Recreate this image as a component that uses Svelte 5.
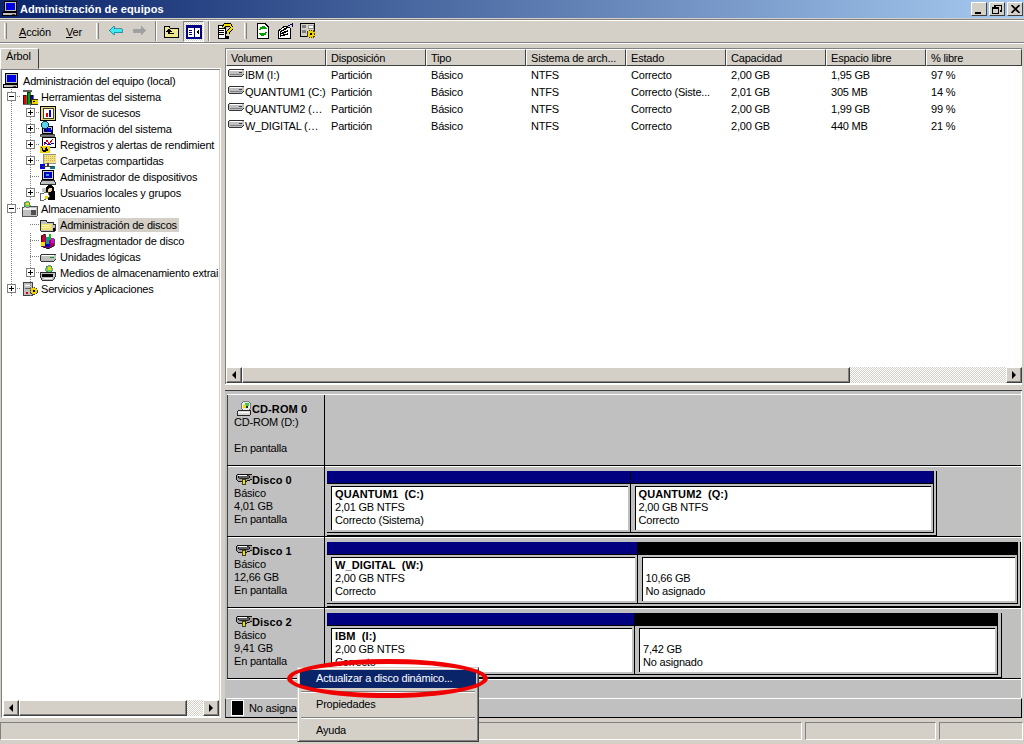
<script>
  const columns = [
    { label: 'Volumen', w: 100 },
    { label: 'Disposición', w: 100 },
    { label: 'Tipo', w: 100 },
    { label: 'Sistema de arch...', w: 100 },
    { label: 'Estado', w: 100 },
    { label: 'Capacidad', w: 100 },
    { label: 'Espacio libre', w: 100 },
    { label: '% libre', w: 96 }
  ];

  const volumes = [
    ['IBM (I:)', 'Partición', 'Básico', 'NTFS', 'Correcto', '2,00 GB', '1,95 GB', '97 %'],
    ['QUANTUM1 (C:)', 'Partición', 'Básico', 'NTFS', 'Correcto (Siste...', '2,01 GB', '305 MB', '14 %'],
    ['QUANTUM2 (…', 'Partición', 'Básico', 'NTFS', 'Correcto', '2,00 GB', '1,99 GB', '99 %'],
    ['W_DIGITAL (…', 'Partición', 'Básico', 'NTFS', 'Correcto', '2,00 GB', '440 MB', '21 %']
  ];

  const tree = [
    { level: 0, label: 'Administración del equipo (local)', icon: 'computer' },
    { level: 1, label: 'Herramientas del sistema', icon: 'tools', box: 'minus' },
    { level: 2, label: 'Visor de sucesos', icon: 'events', box: 'plus' },
    { level: 2, label: 'Información del sistema', icon: 'info', box: 'plus' },
    { level: 2, label: 'Registros y alertas de rendimient', icon: 'perf', box: 'plus' },
    { level: 2, label: 'Carpetas compartidas', icon: 'shared', box: 'plus' },
    { level: 2, label: 'Administrador de dispositivos', icon: 'device' },
    { level: 2, label: 'Usuarios locales y grupos', icon: 'users', box: 'plus' },
    { level: 1, label: 'Almacenamiento', icon: 'storage', box: 'minus' },
    { level: 2, label: 'Administración de discos', icon: 'folder', selected: true },
    { level: 2, label: 'Desfragmentador de disco', icon: 'defrag' },
    { level: 2, label: 'Unidades lógicas', icon: 'drive' },
    { level: 2, label: 'Medios de almacenamiento extrai', icon: 'removable', box: 'plus' },
    { level: 1, label: 'Servicios y Aplicaciones', icon: 'services', box: 'plus' }
  ];

  const disks = [
    {
      name: 'Disco 0',
      lines: ['Básico', '4,01 GB', 'En pantalla'],
      width: 610,
      parts: [
        { w: 304, name: 'QUANTUM1  (C:)', lines: ['2,01 GB NTFS', 'Correcto (Sistema)'] },
        { w: 304, name: 'QUANTUM2  (Q:)', lines: ['2,00 GB NTFS', 'Correcto'] }
      ]
    },
    {
      name: 'Disco 1',
      lines: ['Básico', '12,66 GB', 'En pantalla'],
      width: 694,
      parts: [
        { w: 311, name: 'W_DIGITAL  (W:)', lines: ['2,00 GB NTFS', 'Correcto'] },
        { w: 381, lines: ['10,66 GB', 'No asignado'], free: true }
      ]
    },
    {
      name: 'Disco 2',
      lines: ['Básico', '9,41 GB', 'En pantalla'],
      width: 675,
      parts: [
        { w: 308, name: 'IBM  (I:)', lines: ['2,00 GB NTFS', 'Correcto'] },
        { w: 363, lines: ['7,42 GB', 'No asignado'], free: true }
      ]
    }
  ];
</script>

{#snippet icon(name)}
  <svg class="ico" viewBox="0 0 16 16" width="16" height="16" shape-rendering="crispEdges">
    {#if name === 'computer'}
      <rect x="2.5" y="0.5" width="12" height="10" fill="#c0c0c0" stroke="#000" />
      <rect x="4" y="2" width="9" height="7" fill="#0000e0" />
      <rect x="0.5" y="11.5" width="14" height="3" fill="#c0c0c0" stroke="#000" />
      <rect x="10" y="13" width="3" height="1" fill="#404040" />
    {:else if name === 'device'}
      <rect x="2.5" y="1.5" width="11" height="9" fill="#d4d0c8" stroke="#000" />
      <rect x="4" y="3" width="8" height="6" fill="#0000c0" />
      <rect x="6" y="5" width="3" height="2" fill="#40a0ff" />
      <path d="M2 11 L14 11 L16 15 L0 15 Z" fill="#c0c0c0" stroke="#000" stroke-width="0.8" />
    {:else if name === 'tools'}
      <rect x="1" y="6" width="3" height="9" fill="#e00000" stroke="#000" stroke-width="0.6" />
      <rect x="5" y="3" width="3" height="12" fill="#00a000" stroke="#000" stroke-width="0.6" />
      <rect x="8" y="6" width="3" height="7" fill="#0000c0" stroke="#000" stroke-width="0.6" />
      <path d="M1 1 L10 1 L10 3 L1 3 Z" fill="#606060" />
      <rect x="9" y="10" width="7" height="5" fill="#f0d000" stroke="#000" stroke-width="0.8" />
      <rect x="11" y="12" width="2" height="1" fill="#000" />
    {:else if name === 'events'}
      <rect x="0.5" y="1.5" width="15" height="14" fill="#f0d870" stroke="#000" />
      <rect x="3.5" y="3.5" width="10" height="10" fill="#fff" stroke="#404040" />
      <rect x="6" y="8" width="2" height="4" fill="#e00000" />
      <rect x="9" y="5" width="2" height="7" fill="#0000e0" />
    {:else if name === 'info'}
      <rect x="2.5" y="5.5" width="10" height="7" fill="#c0c0c0" stroke="#000" />
      <rect x="4" y="7" width="7" height="4" fill="#000080" />
      <circle cx="5" cy="4" r="3.5" fill="#60d0f0" stroke="#004040" />
      <path d="M7 7 L12 11" stroke="#0000e0" stroke-width="2.4" />
      <path d="M1 13 L14 13 L15 15 L0 15 Z" fill="#808080" stroke="#000" stroke-width="0.6" />
    {:else if name === 'perf'}
      <rect x="2.5" y="0.5" width="13" height="10" fill="#fff" stroke="#000" />
      <path d="M4 8 L7 3 L9 7 L13 2" fill="none" stroke="#e00000" />
      <path d="M4 5 L8 8 L14 6" fill="none" stroke="#0000e0" />
      <rect x="0" y="9" width="10" height="7" fill="#f0d000" />
      <path d="M1 10 L4 12 L7 10 L8 14 L3 15 Z" fill="#000" />
      <rect x="3" y="12" width="2" height="1" fill="#f0d000" />
    {:else if name === 'shared'}
      <rect x="3" y="1" width="13" height="9" fill="#f0e088" stroke="#808080" stroke-width="0.8" />
      <path d="M4 3 L15 3 M4 5 L15 5 M4 7 L15 7" stroke="#d0b040" stroke-dasharray="1 1" />
      <rect x="7" y="10" width="2" height="3" fill="#404040" />
      <rect x="0" y="11" width="5" height="5" fill="#0000e0" />
      <rect x="10" y="13" width="5" height="3" fill="#008080" />
      <rect x="2" y="13" width="12" height="1" fill="#404040" />
    {:else if name === 'users'}
      <circle cx="10" cy="4" r="4" fill="#000" />
      <path d="M6 5 L15 6 L15 15 L8 15 Z" fill="#000" />
      <circle cx="10" cy="5" r="2" fill="#f0d0a0" />
      <path d="M0 9 L8 7 L10 12 L4 15 L0 15 Z" fill="#fff" stroke="#404040" stroke-width="0.8" />
      <rect x="5" y="11" width="3" height="3" fill="#f0d000" />
      <rect x="2" y="3" width="4" height="4" fill="#c0c0c0" />
    {:else if name === 'storage'}
      <path d="M0 7 L3 5 L15 5 L15 15 L0 15 Z" fill="#c0c0c0" stroke="#303030" stroke-width="0.8" />
      <rect x="1" y="7" width="13" height="2" fill="#f0f0f0" />
      <rect x="9" y="9" width="5" height="5" fill="#505050" />
      <circle cx="5" cy="3.5" r="3" fill="#60d060" stroke="#606060" stroke-width="0.7" />
      <rect x="4" y="2" width="3" height="2" fill="#f0e000" />
    {:else if name === 'folder'}
      <path d="M0 6 L1 3 L6 3 L7 5 L13 5 L13 7 L15 7 L15 14 L1 14 Z" fill="#c0c0c0" stroke="#000" stroke-width="0.8" />
      <rect x="1" y="7" width="11" height="6" fill="#f0e070" />
      <path d="M2 8 L10 8 M2 10 L10 10" stroke="#fff8b0" />
      <rect x="13" y="11" width="2" height="3" fill="#000" />
    {:else if name === 'defrag'}
      <path d="M1 3 L5 1 L6 4 L14 6 L14 13 L8 16 L1 13 Z" fill="#a00060" stroke="#000" stroke-width="0.7" />
      <rect x="3" y="2" width="2" height="7" fill="#e00000" />
      <rect x="6" y="4" width="3" height="7" fill="#00a0a0" />
      <rect x="9" y="1" width="2" height="6" fill="#00c000" />
      <rect x="11" y="5" width="3" height="5" fill="#e000e0" />
      <rect x="5" y="11" width="5" height="3" fill="#0000c0" />
      <rect x="1" y="9" width="4" height="4" fill="#f0e000" />
    {:else if name === 'drive'}
      <path d="M2 5 L15 5 L16 6 L16 10 L14 12 L1 12 L0 10 L0 7 Z" fill="#c0c0c0" stroke="#202020" stroke-width="0.9" />
      <rect x="2" y="6" width="12" height="1" fill="#fff" />
      <rect x="10" y="8" width="4" height="1" fill="#00a000" />
    {:else if name === 'removable'}
      <circle cx="9" cy="4" r="3.5" fill="#60d060" stroke="#606060" stroke-width="0.7" />
      <rect x="8" y="2" width="3" height="3" fill="#f0e000" />
      <path d="M1 7 L15 7 L15 12 L13 15 L2 15 L0 11 Z" fill="#c0c0c0" stroke="#000" stroke-width="0.8" />
      <rect x="2" y="9" width="11" height="3" fill="#000" />
      <rect x="4" y="13" width="8" height="1" fill="#fff" />
    {:else if name === 'services'}
      <rect x="1.5" y="1.5" width="9" height="13" fill="#c0c0c0" stroke="#404040" />
      <rect x="3" y="4" width="6" height="1" fill="#fff" />
      <rect x="3" y="7" width="6" height="1" fill="#606060" />
      <rect x="4" y="11" width="2" height="2" fill="#e00000" />
      <circle cx="12" cy="10" r="3.6" fill="#f0d000" stroke="#404040" stroke-dasharray="1.5 0.8" />
      <circle cx="12" cy="10" r="1" fill="#000" />
    {:else if name === 'disk'}
      <path d="M2 2 L15 2 L16 3 L16 7 L11 9 L2 9 L0 7 L0 4 Z" fill="#a0a0a0" stroke="#000" stroke-width="0.9" />
      <ellipse cx="8" cy="5" rx="6" ry="2" fill="#606060" stroke="#000" stroke-width="0.6" />
      <rect x="2" y="3" width="9" height="1" fill="#fff" />
      <rect x="6" y="7" width="3" height="5" fill="#f0e000" stroke="#000" stroke-width="0.7" />
    {:else if name === 'cdrom'}
      <circle cx="10" cy="5" r="5" fill="#e8e8e8" stroke="#606060" stroke-width="0.8" />
      <rect x="9" y="2" width="4" height="3" fill="#40c840" />
      <rect x="7" y="4" width="3" height="3" fill="#f0e000" />
      <rect x="10" y="5" width="2" height="2" fill="#202060" />
      <path d="M1 11 L3 9 L14 9 L14 14 L1 14 Z" fill="#d8d8d8" stroke="#000" stroke-width="0.8" />
      <rect x="2" y="11" width="11" height="1" fill="#fff" />
    {:else if name === 'list-drive'}
      <path d="M2 2 L15 2 L16 3 L16 7 L14 9 L1 9 L0 7 L0 4 Z" fill="#c0c0c0" stroke="#202020" stroke-width="0.9" />
      <rect x="2" y="3" width="12" height="1" fill="#fff" />
      <rect x="2" y="7" width="12" height="1" fill="#808080" />
      <rect x="11" y="5" width="3" height="1" fill="#404040" />
    {:else if name === 'back'}
      <path d="M1 7.5 L6 3 L6 5.5 L14 5.5 L14 9.5 L6 9.5 L6 12 Z" fill="#40e8f0" stroke="#006080" stroke-width="0.6" />
    {:else if name === 'forward'}
      <path d="M15 7.5 L10 3 L10 5.5 L2 5.5 L2 9.5 L10 9.5 L10 12 Z" fill="#a0a0a0" />
    {:else if name === 'up'}
      <path d="M1 3 L6 3 L7 5 L15 5 L15 14 L1 14 Z" fill="#f0e88c" stroke="#000" />
      <path d="M6 5 L3 9 L5 9 L5 11 L11 11 L11 10 L7 10 L7 9 L9 9 Z" fill="#000" />
    {:else if name === 'tree'}
      <rect x="1" y="2" width="14" height="12" fill="#fff" stroke="#000080" stroke-width="2" />
      <rect x="1" y="2" width="14" height="2" fill="#000080" />
      <rect x="8" y="2" width="1" height="12" fill="#000080" />
      <path d="M3 6.5 L6 6.5 M3 8.5 L6 8.5 M3 10.5 L6 10.5" stroke="#000080" />
      <path d="M13 5 L10 8 L13 11 Z" fill="#000" />
    {:else if name === 'help'}
      <path d="M1 2 L8 2 L8 15 L1 15 Z" fill="#fff" stroke="#000" />
      <path d="M2 5 L7 5 M2 7 L7 7 M2 9 L7 9 M2 11 L7 11" stroke="#000" />
      <path d="M6 5 L8 2 L13 2 L15 5 L11 9 L11 11" fill="none" stroke="#000" stroke-width="3.4" />
      <path d="M6 5 L8 2 L13 2 L15 5 L11 9 L11 11" fill="none" stroke="#f0e000" stroke-width="1.6" />
      <rect x="9" y="13" width="3" height="3" fill="#000" />
    {:else if name === 'refresh'}
      <path d="M2.5 0.5 L10 0.5 L13.5 4 L13.5 15.5 L2.5 15.5 Z" fill="#fff" stroke="#000" />
      <path d="M5 7 A3.2 3.2 0 0 1 10 5 M11 9 A3.2 3.2 0 0 1 6 11" fill="none" stroke="#00a000" stroke-width="2" />
      <path d="M9 2 L12 6 L8 6 Z M7 14 L4 10 L8 10 Z" fill="#00a000" />
    {:else if name === 'props'}
      <path d="M1 8 L8 3 L13 5 L13 15 L1 15 Z" fill="#fff" stroke="#000" />
      <path d="M3 9 L10 5 M3 11 L11 8 M3 13 L11 11" stroke="#000" stroke-width="1.6" />
      <path d="M11 3 L15 1 L15 4" fill="none" stroke="#000060" />
    {:else if name === 'export'}
      <rect x="0.5" y="0.5" width="14" height="13" fill="#d4d0c8" stroke="#000" />
      <rect x="2" y="2" width="4" height="3" fill="#808080" />
      <rect x="8" y="2" width="5" height="3" fill="#fff" stroke="#606060" stroke-width="0.6" />
      <rect x="2" y="7" width="4" height="3" fill="#808080" />
      <circle cx="11" cy="11" r="4" fill="#f0d000" stroke="#404040" stroke-dasharray="1.5 0.8" />
      <circle cx="11" cy="11" r="1" fill="#000" />
    {/if}
  </svg>
{/snippet}

{#snippet hscroll(kind)}
  <div class="hscroll {kind}">
    <button class="sb-btn" aria-label="Izquierda"><span class="tri-l"></span></button>
    <div class="track"><div class="thumb"></div></div>
    <button class="sb-btn" aria-label="Derecha"><span class="tri-r"></span></button>
  </div>
{/snippet}

<div class="window">
  <header class="titlebar">
    {@render icon('computer')}
    <span class="title">Administración de equipos</span>
    <div class="winbtns">
      <button class="winbtn" aria-label="Minimizar"><span class="g-min"></span></button>
      <button class="winbtn" aria-label="Restaurar">
        <svg width="10" height="9" viewBox="0 0 10 9" shape-rendering="crispEdges">
          <path d="M3 0 H10 V6 H8 M3 0 V2" fill="none" stroke="#000" stroke-width="2" />
          <rect x="0.5" y="3" width="6" height="5.5" fill="#d4d0c8" stroke="#000" />
          <rect x="0" y="2" width="7" height="2" fill="#000" />
        </svg>
      </button>
      <button class="winbtn close" aria-label="Cerrar">
        <svg width="9" height="8" viewBox="0 0 9 8"><path d="M0.5 0 L8.5 8 M8.5 0 L0.5 8" stroke="#000" stroke-width="1.6" /></svg>
      </button>
    </div>
  </header>

  <div class="toolbar">
    <span class="grip"></span>
    <span class="menu-item accion"><u>A</u>cción</span>
    <span class="menu-item ver"><u>V</u>er</span>
    <span class="grip nav"></span>
    <span class="tb back">{@render icon('back')}</span>
    <span class="tb fwd">{@render icon('forward')}</span>
    <span class="sep a"></span>
    <span class="tb up">{@render icon('up')}</span>
    <span class="tb pressed">{@render icon('tree')}</span>
    <span class="sep b"></span>
    <span class="tb help">{@render icon('help')}</span>
    <span class="grip extra"></span>
    <span class="tb refresh">{@render icon('refresh')}</span>
    <span class="tb props">{@render icon('props')}</span>
    <span class="tb export">{@render icon('export')}</span>
  </div>

  <div class="main">
    <section class="left">
      <div class="tabs"><span class="tab">Árbol</span></div>
      <div class="tree-frame">
        <ul class="tree">
          {#each tree as node}
            <li class="node lv{node.level}">
              {#if node.level > 0}<span class="h-dot"></span>{/if}
              {#if node.box}
                <span class="box">
                  <span class="bar-h"></span>
                  {#if node.box === 'plus'}<span class="bar-v"></span>{/if}
                </span>
              {/if}
              {@render icon(node.icon)}
              <span class="label" class:selected={node.selected}>{node.label}</span>
            </li>
          {/each}
        </ul>
        <span class="v-dot v1"></span>
        <span class="v-dot v2"></span>
        <span class="v-dot v3"></span>
        {@render hscroll('narrow')}
      </div>
    </section>

    <section class="right">
      <div class="list-frame">
        <div class="list-head">
          {#each columns as c}
            <div class="th" style="width:{c.w}px">{c.label}</div>
          {/each}
        </div>
        <div class="list-body">
          {#each volumes as row}
            <div class="tr">
              {#each row as cell, i}
                <div class="td" class:first={i === 0} style="width:{columns[i].w}px">
                  {#if i === 0}{@render icon('list-drive')}{/if}{cell}
                </div>
              {/each}
            </div>
          {/each}
        </div>
        {@render hscroll('wide')}
      </div>

      <div class="splitter"></div>

      <div class="disk-area">
        <div class="disk-row">
          <div class="disk-label">
            <div class="disk-name">{@render icon('cdrom')}CD-ROM 0</div>
            <div>CD-ROM (D:)</div>
            <div>&nbsp;</div>
            <div>En pantalla</div>
          </div>
          <div class="disk-map"></div>
        </div>
        {#each disks as d}
          <div class="disk-row">
            <div class="disk-label">
              <div class="disk-name">{@render icon('disk')}{d.name}</div>
              {#each d.lines as line}<div>{line}</div>{/each}
            </div>
            <div class="disk-map">
              <div class="disk-frame" style="width:{d.width}px">
                {#each d.parts as p}
                  <div class="part" class:free={p.free} style="width:{p.w}px">
                    <div class="part-head"></div>
                    <div class="part-body">
                      {#if p.name}<div class="part-name">{p.name}</div>{:else}<div>&nbsp;</div>{/if}
                      {#each p.lines as line}<div>{line}</div>{/each}
                    </div>
                  </div>
                {/each}
              </div>
            </div>
          </div>
        {/each}
      </div>

      <div class="legend">
        <span class="swatch"></span>
        <span>No asignado</span>
      </div>
    </section>
  </div>

  <footer class="status">
    <span class="panel grow"></span>
    <span class="panel mid"></span>
    <span class="panel end"></span>
  </footer>

  <div class="ctx-menu">
    <div class="ctx-item active">Actualizar a disco dinámico...</div>
    <div class="ctx-sep"></div>
    <div class="ctx-item">Propiedades</div>
    <div class="ctx-sep"></div>
    <div class="ctx-item">Ayuda</div>
  </div>
  <div class="ring"></div>
</div>

<style>
  :global(body) {
    margin: 0;
    background: #d4d0c8;
  }

  .window {
    position: relative;
    width: 1024px;
    height: 744px;
    overflow: hidden;
    display: flex;
    flex-direction: column;
    background: #d4d0c8;
    color: #000;
    font-family: "Liberation Sans", Arial, sans-serif;
    font-size: 11px;
    letter-spacing: -0.2px;
  }

  .ico {
    flex: none;
    display: block;
  }

  .titlebar {
    height: 18px;
    flex: none;
    display: flex;
    align-items: center;
    padding: 0 1px 0 2px;
    background: linear-gradient(90deg, #0a246a, #a6caf0);
  }

  .title {
    margin-left: 2px;
    color: #fff;
    font-weight: 700;
    font-size: 11px;
    letter-spacing: 0.1px;
  }

  .winbtns {
    margin-left: auto;
    display: flex;
    gap: 2px;
  }

  .winbtn {
    width: 16px;
    height: 14px;
    padding: 0;
    display: flex;
    align-items: center;
    justify-content: center;
    background: #d4d0c8;
    border: 1px solid;
    border-color: #fff #404040 #404040 #fff;
  }

  .g-min {
    width: 6px;
    height: 2px;
    background: #000;
    margin-top: 7px;
    margin-right: 3px;
  }

  .toolbar {
    height: 24px;
    flex: none;
    margin-top: 1px;
    box-sizing: border-box;
    display: flex;
    align-items: center;
    border-top: 1px solid #808080;
    border-bottom: 1px solid #808080;
    box-shadow: inset 0 1px 0 #fff, 0 1px 0 #fff;
  }

  .grip {
    width: 1px;
    height: 16px;
    margin-left: 4px;
    background: #d4d0c8;
    border-left: 1px solid #fff;
    border-right: 1px solid #808080;
  }

  .grip.nav {
    margin-left: 0;
  }

  .grip.extra {
    margin-left: 11px;
  }

  .menu-item {
    margin-top: 2px;
  }

  .menu-item.accion {
    margin-left: 12px;
    width: 47px;
  }

  .menu-item.ver {
    width: 30px;
  }

  .tb {
    width: 16px;
    height: 16px;
    display: block;
  }

  .tb.back { margin-left: 9px; }
  .tb.fwd { margin-left: 7px; }
  .tb.up { margin-left: 6px; }
  .tb.help { margin-left: 7px; }
  .tb.refresh { margin-left: 8px; }
  .tb.props { margin-left: 6px; }
  .tb.export { margin-left: 7px; }

  .tb.pressed {
    width: 21px;
    height: 21px;
    margin-left: 4px;
    padding: 2px;
    box-sizing: border-box;
    border: 1px solid #808080;
    border-right-color: #fff;
    border-bottom-color: #fff;
    background: repeating-conic-gradient(#fff 0 25%, #d4d0c8 0 50%) 0 0 / 2px 2px;
  }

  .sep {
    width: 1px;
    height: 20px;
    background: #808080;
    border-right: 1px solid #fff;
  }

  .sep.a { margin-left: 8px; }
  .sep.b { margin-left: 4px; }

  .main {
    flex: 1;
    display: flex;
    min-height: 0;
    padding-top: 5px;
  }

  .left {
    width: 221px;
    flex: none;
    display: flex;
    flex-direction: column;
  }

  .tabs {
    height: 21px;
    flex: none;
    margin-top: -1px;
    display: flex;
    align-items: flex-end;
  }

  .tab {
    width: 39px;
    height: 21px;
    box-sizing: border-box;
    padding: 1px 0 0 5px;
    background: #d4d0c8;
    border: 1px solid;
    border-color: #fff #404040 #d4d0c8 #fff;
    border-radius: 2px 2px 0 0;
    position: relative;
    z-index: 1;
    margin-bottom: -1px;
  }

  .tree-frame {
    position: relative;
    flex: 1;
    margin-left: 1px;
    display: flex;
    flex-direction: column;
    background: #fff;
    border: 1px solid;
    border-color: #fff #fff #fff #808080;
    box-shadow: inset 0 1px 0 #808080, inset -1px 0 0 #d4d0c8;
    box-sizing: border-box;
    min-height: 0;
  }

  .tree {
    list-style: none;
    margin: 0;
    padding: 4px 0 0;
    flex: 1;
    overflow: hidden;
  }

  .node {
    position: relative;
    height: 16px;
    display: flex;
    align-items: center;
    white-space: nowrap;
    overflow: hidden;
  }

  .node :global(.ico) {
    position: absolute;
    top: 0;
  }

  .lv0 :global(.ico) { left: 1px; }
  .lv1 :global(.ico) { left: 20px; }
  .lv2 :global(.ico) { left: 38px; }

  .label {
    padding: 0 2px;
    line-height: 14px;
  }

  .lv0 .label { margin-left: 19px; }
  .lv1 .label { margin-left: 37px; }
  .lv2 .label { margin-left: 56px; }

  .label.selected {
    background: #d4d0c8;
  }

  .box {
    position: absolute;
    top: 3px;
    width: 9px;
    height: 9px;
    box-sizing: border-box;
    border: 1px solid #808080;
    background: #fff;
    z-index: 1;
  }

  .lv1 .box { left: 5px; }
  .lv2 .box { left: 24px; }

  .bar-h {
    position: absolute;
    left: 1px;
    top: 3px;
    width: 5px;
    height: 1px;
    background: #000;
  }

  .bar-v {
    position: absolute;
    left: 3px;
    top: 1px;
    width: 1px;
    height: 5px;
    background: #000;
  }

  .h-dot {
    position: absolute;
    top: 7px;
    height: 1px;
    width: 10px;
    background: repeating-linear-gradient(90deg, #808080 0 1px, transparent 1px 2px);
  }

  .lv1 .h-dot { left: 9px; }
  .lv2 .h-dot { left: 28px; }

  .v-dot {
    position: absolute;
    width: 1px;
    background: repeating-linear-gradient(180deg, #808080 0 1px, transparent 1px 2px);
  }

  .v1 { left: 9px; top: 20px; height: 208px; }
  .v2 { left: 28px; top: 36px; height: 96px; }
  .v3 { left: 28px; top: 164px; height: 64px; }

  .hscroll {
    height: 16px;
    flex: none;
    display: flex;
  }

  .hscroll.narrow {
    margin: 0 1px 1px;
  }

  .hscroll.wide {
    margin-bottom: 1px;
  }

  .sb-btn {
    width: 16px;
    height: 16px;
    padding: 0;
    flex: none;
    display: flex;
    align-items: center;
    justify-content: center;
    background: #d4d0c8;
    border: 1px solid;
    border-color: #fff #404040 #404040 #fff;
    box-shadow: inset -1px -1px 0 #808080;
  }

  .tri-l, .tri-r {
    width: 0;
    height: 0;
    border-top: 4px solid transparent;
    border-bottom: 4px solid transparent;
  }

  .tri-l { border-right: 4px solid #000; }
  .tri-r { border-left: 4px solid #000; }

  .track {
    flex: 1;
    display: flex;
    background: repeating-conic-gradient(#fff 0 25%, #d4d0c8 0 50%) 0 0 / 2px 2px;
  }

  .thumb {
    width: 168px;
    box-sizing: border-box;
    background: #d4d0c8;
    border: 1px solid;
    border-color: #fff #404040 #404040 #fff;
    box-shadow: inset -1px -1px 0 #808080;
  }

  .hscroll.wide .thumb {
    width: 608px;
  }

  .right {
    flex: 1;
    display: flex;
    flex-direction: column;
    min-width: 0;
    margin-left: 4px;
    margin-right: 2px;
  }

  .list-frame {
    height: 336px;
    flex: none;
    box-sizing: border-box;
    display: flex;
    flex-direction: column;
    background: #fff;
    border-top: 1px solid #808080;
    border-left: 1px solid #808080;
  }

  .list-head {
    display: flex;
    height: 17px;
    flex: none;
  }

  .th {
    box-sizing: border-box;
    height: 17px;
    padding: 2px 0 0 4px;
    background: #d4d0c8;
    border: 1px solid;
    border-color: #fff #404040 #404040 #fff;
    white-space: nowrap;
    overflow: hidden;
  }

  .list-body {
    flex: 1;
  }

  .tr {
    display: flex;
    height: 17px;
    align-items: center;
  }

  .td {
    box-sizing: border-box;
    padding-left: 5px;
    white-space: nowrap;
    overflow: hidden;
  }

  .td.first {
    padding-left: 2px;
    display: flex;
    align-items: center;
    gap: 1px;
  }

  .splitter {
    height: 7px;
    flex: none;
    box-sizing: border-box;
    border-top: 1px solid #fff;
    border-bottom: 1px solid #404040;
    background: #d4d0c8;
  }

  .disk-area {
    flex: 1;
    min-height: 0;
    background: #c0c0c0;
    border-right: 1px solid #fff;
    padding: 4px 0 0 2px;
    box-sizing: border-box;
  }

  .disk-row {
    height: 71px;
    box-sizing: border-box;
    display: flex;
    border-bottom: 1px solid #000;
    box-shadow: 0 1px 0 #fff;
  }

  .disk-row:first-child {
    box-shadow: 0 1px 0 #fff, 0 -1px 0 #fff;
  }

  .disk-label {
    width: 98px;
    flex: none;
    box-sizing: border-box;
    border-left: 1px solid #404040;
    border-right: 1px solid #000;
    padding: 4px 0 0 6px;
    line-height: 13px;
  }

  .disk-name {
    display: flex;
    align-items: center;
    height: 16px;
    margin: 2px 0 -1px 2px;
    font-weight: 700;
    letter-spacing: 0.1px;
  }

  .disk-map {
    flex: 1;
    padding: 5px 0 0 2px;
    min-width: 0;
  }

  .disk-frame {
    display: flex;
    height: 65px;
    box-sizing: border-box;
    border-right: 1px solid #000;
    border-bottom: 1px solid #000;
    padding-right: 2px;
    padding-bottom: 2px;
  }

  .part {
    box-sizing: border-box;
    display: flex;
    flex-direction: column;
    border-right: 1px solid #000;
    border-bottom: 1px solid #000;
    padding-right: 1px;
    padding-bottom: 2px;
  }

  .part-head {
    height: 12px;
    flex: none;
    background: #000080;
    border-bottom: 1px solid #000;
    margin-right: -1px;
  }

  .free .part-head {
    background: #000;
  }

  .part-body {
    flex: 1;
    margin: 2px 1px 0 4px;
    padding: 1px 0 0 3px;
    background: #fff;
    border-top: 1px solid #000;
    border-left: 1px solid #000;
    line-height: 13px;
    overflow: hidden;
    white-space: nowrap;
  }

  .part-name {
    font-weight: 700;
    letter-spacing: 0.1px;
    white-space: pre;
  }

  .legend {
    height: 20px;
    flex: none;
    box-sizing: border-box;
    display: flex;
    align-items: center;
    gap: 5px;
    padding-left: 5px;
    background: #c0c0c0;
    border-top: 1px solid #fff;
    border-bottom: 1px solid #000;
    border-right: 1px solid #000;
    border-left: 1px solid #404040;
  }

  .swatch {
    width: 11px;
    height: 14px;
    background: #000;
    border: 1px solid #fff;
  }

  .status {
    height: 26px;
    flex: none;
    box-sizing: border-box;
    display: flex;
    gap: 3px;
    padding: 4px 1px 4px 0;
  }

  .panel {
    box-sizing: border-box;
    border: 1px solid;
    border-color: #808080 #fff #fff #808080;
  }

  .panel.grow { flex: 1; }
  .panel.mid { width: 131px; }
  .panel.end { width: 84px; }

  .ctx-menu {
    position: absolute;
    left: 297px;
    top: 667px;
    width: 182px;
    height: 75px;
    box-sizing: border-box;
    padding: 2px;
    background: #d4d0c8;
    border: 1px solid;
    border-color: #d4d0c8 #404040 #404040 #d4d0c8;
    box-shadow: inset 1px 1px 0 #fff, inset -1px -1px 0 #808080;
    z-index: 3;
  }

  .ctx-item {
    height: 18px;
    line-height: 17px;
    padding-left: 16px;
  }

  .ctx-item.active {
    background: #0a246a;
    color: #fff;
  }

  .ctx-sep {
    height: 1px;
    margin: 3px 1px;
    background: #808080;
    border-bottom: 1px solid #fff;
  }

  .ring {
    position: absolute;
    left: 287px;
    top: 659px;
    width: 201px;
    height: 39px;
    box-sizing: border-box;
    border: 5px solid #f00000;
    border-radius: 50%;
    z-index: 4;
  }
</style>
